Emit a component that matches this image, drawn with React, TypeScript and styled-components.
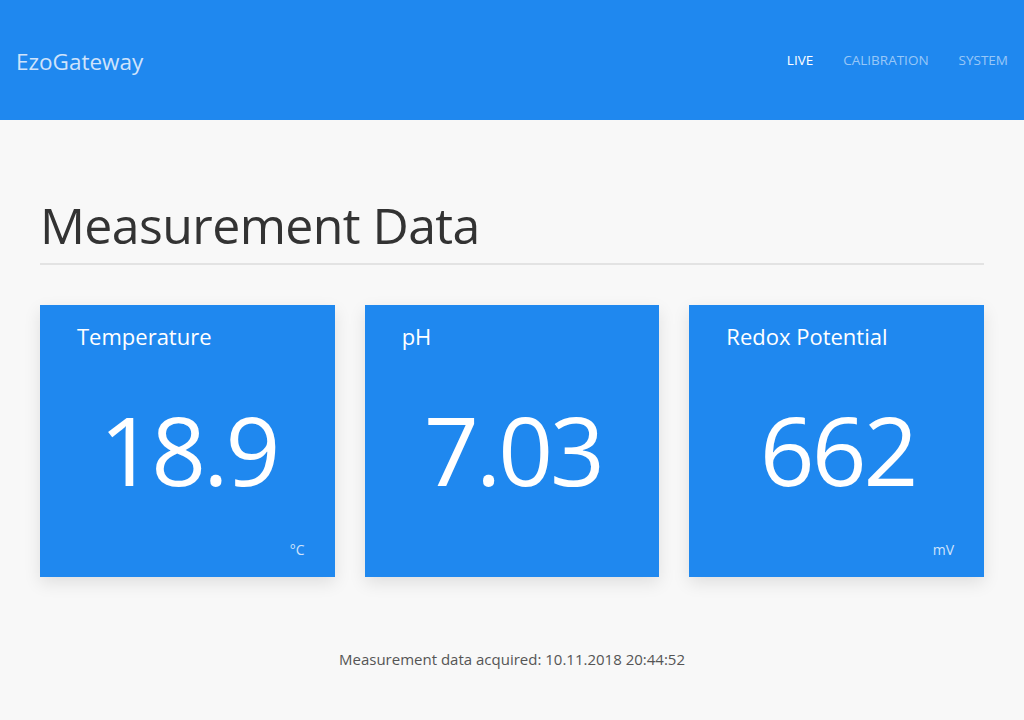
import React from "react";
import styled, { createGlobalStyle } from "styled-components";

const Global = createGlobalStyle`
  html, body { margin: 0; padding: 0; background: #f8f8f8; }
  body { font-family: "Open Sans", "Noto Sans", sans-serif; color: #333; }
`;

const Header = styled.header`
  height: 120px;
  background: #1f88ef;
  display: flex;
  align-items: center;
  justify-content: space-between;
  padding: 0 16px;
  box-sizing: border-box;
`;

const Brand = styled.div`
  font-size: 22.5px;
  color: #cfe3fb;
  margin-top: 2px;
`;

const Nav = styled.nav`
  display: flex;
  gap: 30px;
`;

const NavLink = styled.a<{ $active?: boolean }>`
  font-size: 13.5px;
  color: ${(p) => (p.$active ? "#ffffff" : "rgba(255,255,255,0.55)")};
  text-decoration: none;
`;

const Main = styled.main`
  padding: 0 40px;
`;

const Title = styled.h1`
  margin: 75px 0 0;
  padding-bottom: 8px;
  font-size: 50px;
  letter-spacing: -0.6px;
  font-weight: 400;
  color: #333;
  border-bottom: 2px solid #e3e3e3;
  line-height: 1.2;
`;

const Cards = styled.div`
  display: grid;
  grid-template-columns: repeat(3, 1fr);
  gap: 30px;
  margin-top: 40px;
`;

const Card = styled.div`
  height: 272px;
  background: #1f88ef;
  box-shadow: 0 6px 16px rgba(0, 0, 0, 0.1);
  display: flex;
  flex-direction: column;
  padding: 16px 30px 18px 37px;
  box-sizing: border-box;
  color: #fff;
`;

const CardTitle = styled.div`
  font-size: 22px;
`;

const CardValue = styled.div`
  flex: 1;
  display: flex;
  align-items: center;
  justify-content: center;
  font-size: 96px;
  letter-spacing: -3px;
  margin-left: -5px;
  padding-top: 6px;
`;

const CardUnit = styled.div`
  text-align: right;
  font-size: 14px;
  color: #cfe3fb;
  min-height: 19px;
`;

const Footer = styled.p`
  text-align: center;
  font-size: 15px;
  color: #555;
  margin: 72px 0 0;
`;

const data = [
  { title: "Temperature", value: "18.9", unit: "°C" },
  { title: "pH", value: "7.03", unit: "" },
  { title: "Redox Potential", value: "662", unit: "mV" },
];

export default function App() {
  return (
    <>
      <Global />
      <Header>
        <Brand>EzoGateway</Brand>
        <Nav>
          <NavLink $active>LIVE</NavLink>
          <NavLink>CALIBRATION</NavLink>
          <NavLink>SYSTEM</NavLink>
        </Nav>
      </Header>
      <Main>
        <Title>Measurement Data</Title>
        <Cards>
          {data.map((d) => (
            <Card key={d.title}>
              <CardTitle>{d.title}</CardTitle>
              <CardValue>{d.value}</CardValue>
              <CardUnit>{d.unit}</CardUnit>
            </Card>
          ))}
        </Cards>
        <Footer>Measurement data acquired: 10.11.2018 20:44:52</Footer>
      </Main>
    </>
  );
}
